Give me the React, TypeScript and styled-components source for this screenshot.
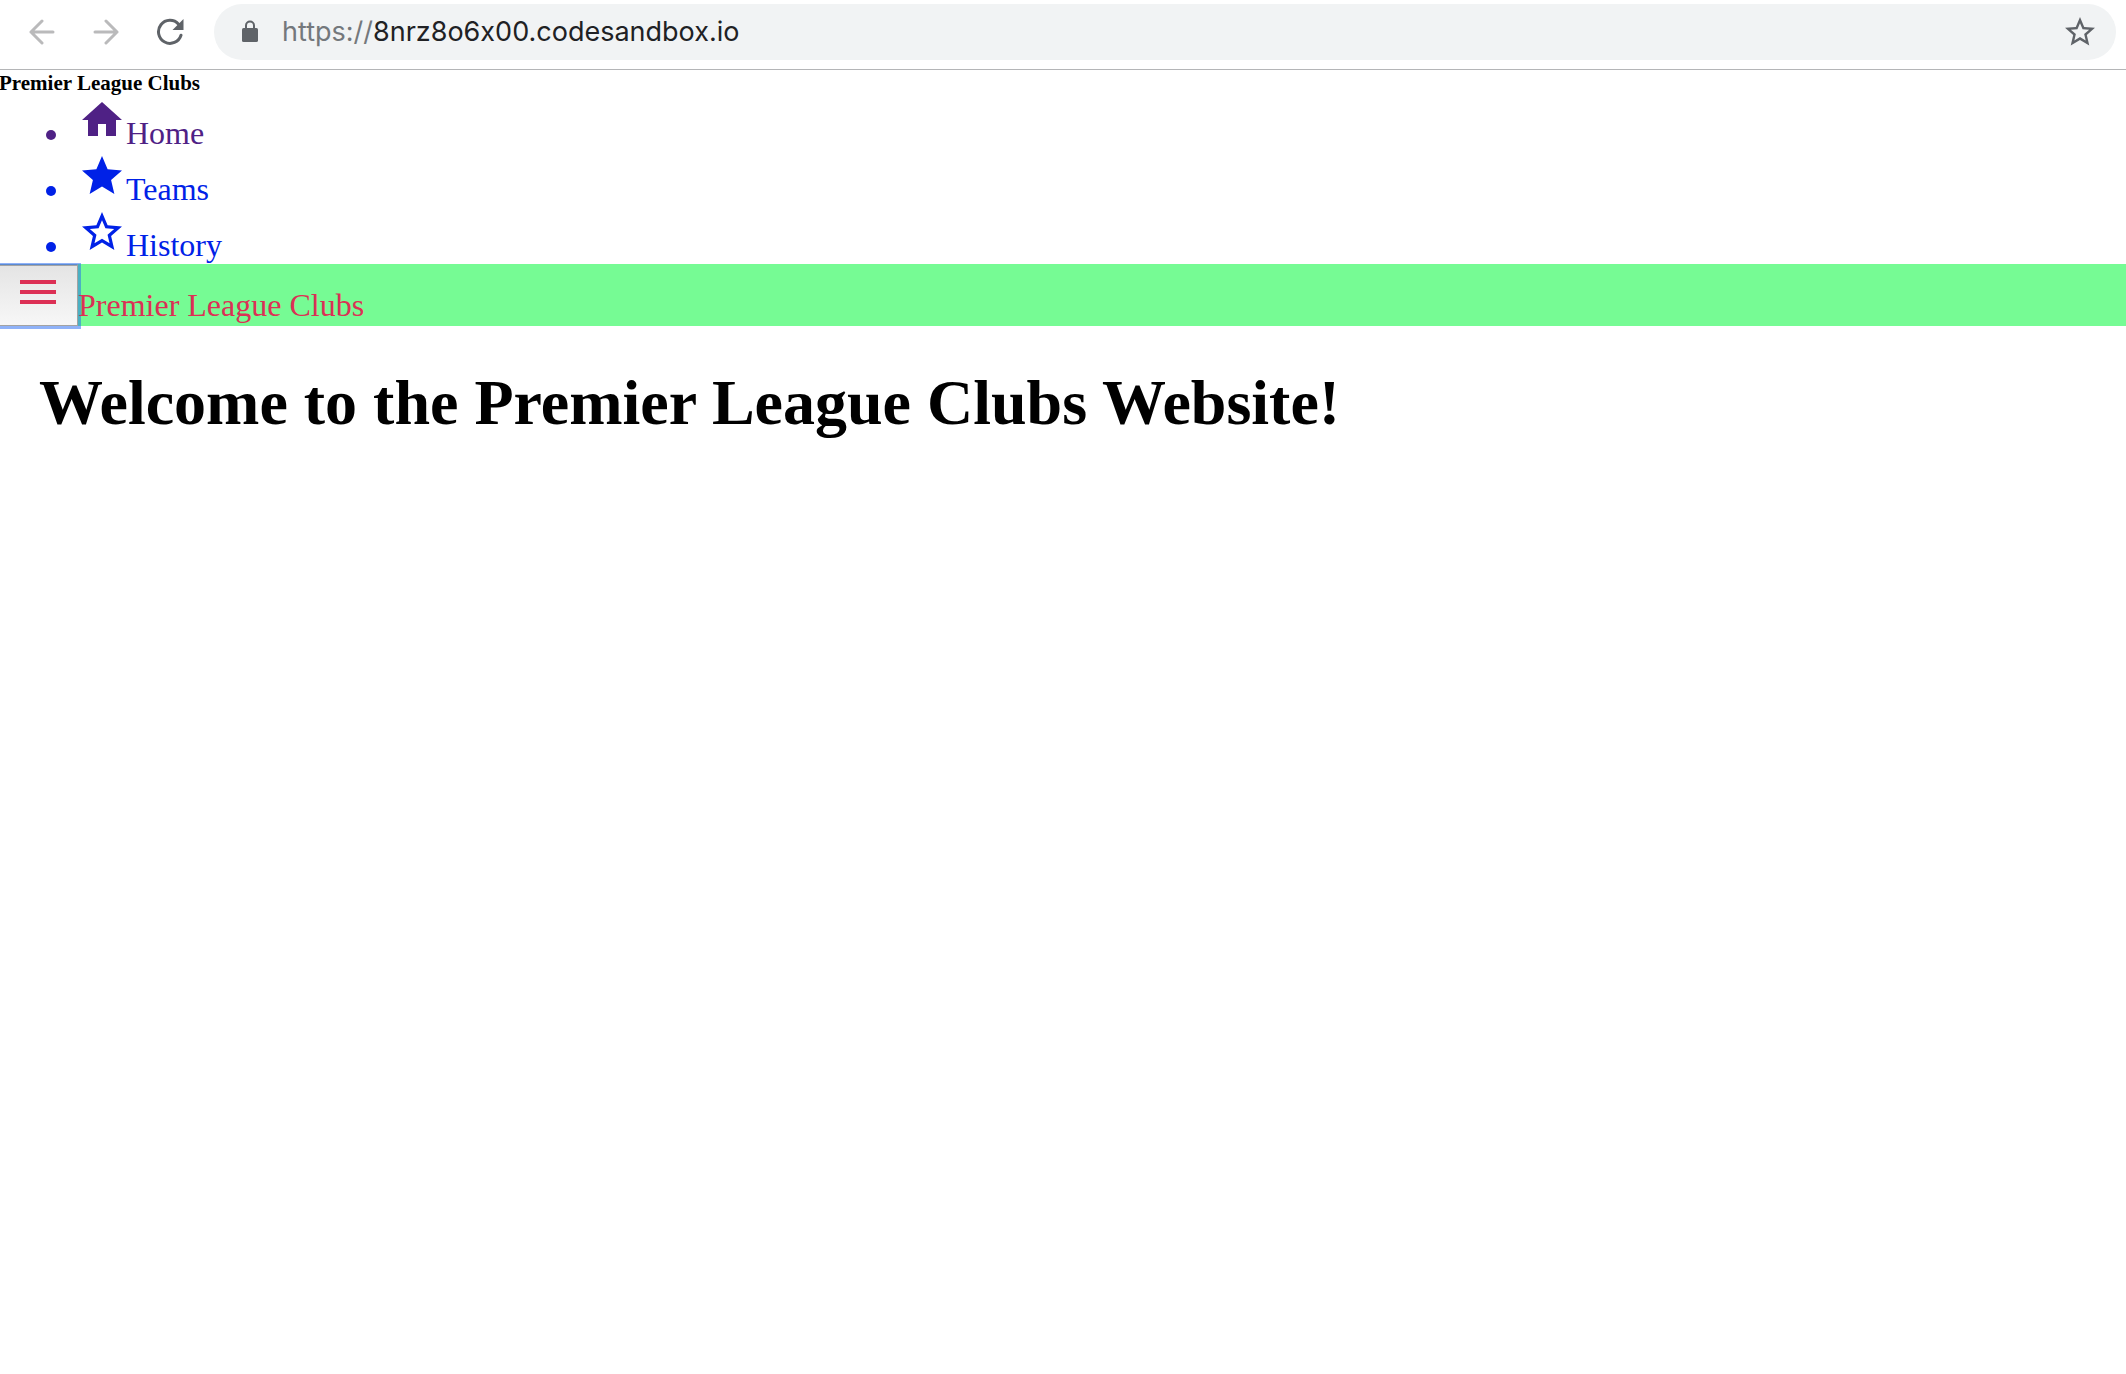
import React from "react";
import styled, { createGlobalStyle } from "styled-components";

const serif = '"Liberation Serif", "Times New Roman", serif';
const sans = 'Inter, Roboto, sans-serif';

const GlobalStyle = createGlobalStyle`
  * { box-sizing: border-box; }
  body {
    margin: 0;
    background: #fff;
    font: 32px/36px ${serif};
    color: #000;
    overflow-x: hidden;
  }
`;

const Toolbar = styled.header`
  display: flex;
  align-items: center;
  gap: 16px;
  height: 70px;
  padding: 4px 10px 9px 18px;
  background: #fff;
  border-bottom: 1px solid #b4b5b7;
`;

const ToolButton = styled.button<{ $muted?: boolean }>`
  display: flex;
  align-items: center;
  justify-content: center;
  width: 48px;
  height: 48px;
  padding: 0;
  border: 0;
  background: transparent;
  color: ${(p) => (p.$muted ? "#bababb" : "#5f6368")};
`;

const AddressBar = styled.div`
  display: flex;
  align-items: center;
  flex: 1;
  height: 56px;
  margin-left: 4px;
  padding: 0 12px 0 24px;
  border-radius: 28px;
  background: #f1f3f4;
  color: #5f6368;
`;

const Address = styled.a`
  flex: 1;
  margin-left: 20px;
  font: 27px/36px ${sans};
  font-variant-ligatures: no-contextual;
  color: #202124;
  text-decoration: none;
`;

const Scheme = styled.span`
  color: #74787c;
`;

const Page = styled.div`
  margin-left: -1px;
`;

const DrawerTitle = styled.h6`
  margin: 0;
  font-size: 21px;
  line-height: 26px;
  font-weight: bold;
`;

const NavList = styled.ul`
  margin: 0;
  padding: 0 0 0 73px;
`;

const NavItem = styled.li<{ $visited?: boolean }>`
  height: 56px;
  padding-left: 6px;
  color: ${(p) => (p.$visited ? "#4f2185" : "#0021e7")};
`;

const NavLink = styled.a`
  color: inherit;
  text-decoration: none;
`;

const AppBar = styled.div`
  display: flex;
  align-items: baseline;
  height: 62px;
  background: #76fb94;
  color: #dc3055;
`;

const MenuButton = styled.button`
  display: flex;
  height: 62px;
  padding: 3px 15px 0 14px;
  border: 1px solid #a3a3a3;
  border-top-color: #5b8ad0;
  background: linear-gradient(#e4e4e4, #f7f7f7);
  color: inherit;
  box-shadow: inset 0 1px 0 #a3a3a3, 1px 1px 0 2px rgba(31, 101, 241, 0.5);
`;

const Main = styled.main`
  padding: 41px 40px;
`;

const Welcome = styled.h1`
  margin: 0;
  font-size: 64px;
  line-height: 72px;
  font-weight: bold;
`;

const Glyph = ({ d, size = 48 }: { d: string; size?: number }) => (
  <svg width={size} height={size} viewBox="0 0 24 24" fill="currentColor" aria-hidden="true">
    <path d={d} />
  </svg>
);

const STAR = "M12 17.27L18.18 21l-1.64-7.03L22 9.24l-7.19-.61L12 2 9.19 8.63 2 9.24l5.46 4.73L5.82 21z";
const STAR_BORDER =
  "M22 9.24l-7.19-.62L12 2 9.19 8.63 2 9.24l5.46 4.73L5.82 21 12 17.27 18.18 21l-1.63-7.03L22 9.24zM12 15.4l-3.76 2.27 1-4.28-3.32-2.88 4.38-.38L12 6.1l1.71 4.04 4.38.38-3.32 2.88 1 4.28L12 15.4z";
const HOME = "M10 20v-6h4v6h5v-8h3L12 3 2 12h3v8z";
const MENU = "M3 18h18v-2H3v2zm0-5h18v-2H3v2zm0-7v2h18V6H3z";

const links = [
  { label: "Home", icon: HOME, visited: true },
  { label: "Teams", icon: STAR },
  { label: "History", icon: STAR_BORDER },
];

const ArrowIcon = ({ d }: { d: string }) => (
  <svg width="26" height="26" viewBox="0 0 26 26" fill="none" stroke="currentColor" strokeWidth="3" strokeLinecap="round" strokeLinejoin="round" aria-hidden="true">
    <path d={d} />
  </svg>
);

const ReloadIcon = () => (
  <svg width="28" height="28" viewBox="0 0 28 28" aria-hidden="true">
    <path d="M22.6 6.2A11.5 11.5 0 1 0 25 17.2" fill="none" stroke="currentColor" strokeWidth="3" strokeLinecap="round" />
    <path d="M27.5 1v11H16.5z" fill="currentColor" />
  </svg>
);

const LockIcon = () => (
  <svg width="24" height="24" viewBox="0 0 24 24" aria-hidden="true">
    <rect x="4" y="8" width="16" height="14" rx="1.6" fill="currentColor" />
    <path d="M8 9V5.5a4 4 0 0 1 8 0V9" fill="none" stroke="currentColor" strokeWidth="2" />
  </svg>
);

export default function App() {
  return (
    <>
      <GlobalStyle />
      <Toolbar>
        <ToolButton $muted aria-label="Back">
          <ArrowIcon d="M24 13H2M13 2L2 13l11 11" />
        </ToolButton>
        <ToolButton $muted aria-label="Forward">
          <ArrowIcon d="M2 13h22M13 2l11 11-11 11" />
        </ToolButton>
        <ToolButton aria-label="Reload">
          <ReloadIcon />
        </ToolButton>
        <AddressBar>
          <LockIcon />
          <Address href="#">
            <Scheme>https://</Scheme>8nrz8o6x00.codesandbox.io
          </Address>
          <ToolButton aria-label="Bookmark this page">
            <Glyph d={STAR_BORDER} size={36} />
          </ToolButton>
        </AddressBar>
      </Toolbar>
      <Page>
        <nav>
          <DrawerTitle>Premier League Clubs</DrawerTitle>
          <NavList>
            {links.map((link) => (
              <NavItem key={link.label} $visited={link.visited}>
                <NavLink href="#">
                  <Glyph d={link.icon} />
                  {link.label}
                </NavLink>
              </NavItem>
            ))}
          </NavList>
        </nav>
        <AppBar>
          <MenuButton aria-label="Open menu">
            <Glyph d={MENU} />
          </MenuButton>
          <span>Premier League Clubs</span>
        </AppBar>
        <Main>
          <Welcome>Welcome to the Premier League Clubs Website!</Welcome>
        </Main>
      </Page>
    </>
  );
}
